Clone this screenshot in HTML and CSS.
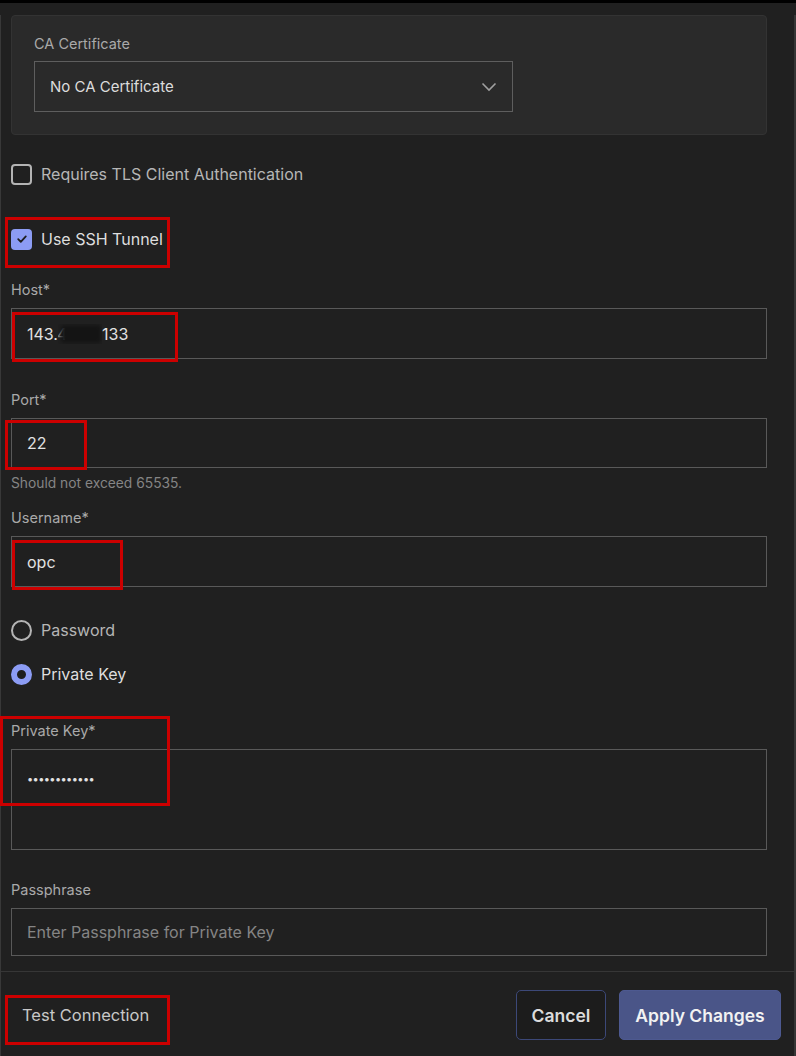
FILE: index.html
```html
<!DOCTYPE html>
<html lang="en">
<head>
    <meta charset="UTF-8">
    <meta name="viewport" content="width=device-width, initial-scale=1.0">
    <title>SSH Tunnel Settings</title>
    <link rel="stylesheet" href="styles.css">
</head>
<body>
    <div class="topbar"></div>

    <div class="panel">
        <div class="form">
            <!-- CA certificate -->
            <div class="card">
                <label class="label">CA Certificate</label>
                <div class="select">
                    <span>No CA Certificate</span>
                    <svg class="chevron" width="16" height="10" viewBox="0 0 16 10">
                        <path d="M1.5 1.5 L8 8 L14.5 1.5" fill="none" stroke="#a0a0a0" stroke-width="1.6"/>
                    </svg>
                </div>
            </div>

            <div class="check-row tls">
                <span class="box"></span>
                <span>Requires TLS Client Authentication</span>
            </div>

            <div class="check-row ssh">
                <span class="box checked">
                    <svg width="14" height="14" viewBox="0 0 14 14">
                        <path d="M3.2 7.2 L5.8 9.8 L10.8 4.4" fill="none" stroke="#1e1e1e" stroke-width="1.8" stroke-linecap="round" stroke-linejoin="round"/>
                    </svg>
                </span>
                <span class="bright">Use SSH Tunnel</span>
                <div class="mark mark-ssh"></div>
            </div>

            <!-- Host -->
            <div class="field host">
                <label class="label">Host*</label>
                <div class="input">143.<span class="redact"><span class="four">4</span></span>133</div>
                <div class="mark mark-host"></div>
            </div>

            <!-- Port -->
            <div class="field port">
                <label class="label">Port*</label>
                <div class="input">22</div>
                <div class="hint">Should not exceed 65535.</div>
                <div class="mark mark-port"></div>
            </div>

            <!-- Username -->
            <div class="field user">
                <label class="label">Username*</label>
                <div class="input">opc</div>
                <div class="mark mark-user"></div>
            </div>

            <div class="radio-row pw">
                <span class="radio"></span>
                <span>Password</span>
            </div>
            <div class="radio-row pk">
                <span class="radio on"></span>
                <span class="bright">Private Key</span>
            </div>

            <!-- Private key -->
            <div class="field key">
                <label class="label">Private Key*</label>
                <div class="textarea">••••••••••••</div>
                <div class="mark mark-key"></div>
            </div>

            <div class="field pass">
                <label class="label">Passphrase</label>
                <div class="input placeholder">Enter Passphrase for Private Key</div>
            </div>
        </div>

        <div class="footer">
            <div class="test">
                Test Connection
                <div class="mark mark-test"></div>
            </div>
            <div class="actions">
                <button class="btn cancel">Cancel</button>
                <button class="btn apply">Apply Changes</button>
            </div>
        </div>
    </div>
</body>
</html>
```

FILE: styles.css
```css
html {
    background: #202020;
}
body {
    margin: 0;
    width: 796px;
    min-height: 1056px;
    background: #202020;
    font-family: 'Inter', 'Noto Sans', sans-serif;
    color: #b8b8b8;
}
.topbar {
    height: 3px;
    background: #000;
}
.panel {
    min-height: 1053px;
    box-sizing: border-box;
    border-left: 1px solid #383838;
    border-right: 2px solid #363636;
}
.form {
    padding: 0 27px 0 10px;
}
.label {
    display: block;
    font-size: 14.5px;
    line-height: 20px;
    color: #a9a9a9;
}

/* card */
.card {
    margin-top: 12px;
    background: #2a2a2a;
    border: 1px solid #333;
    border-radius: 4px;
    padding: 18px 22px 22px;
}
.select {
    margin-top: 7px;
    width: 479px;
    height: 51px;
    box-sizing: border-box;
    border: 1px solid #5e5e5e;
    display: flex;
    align-items: center;
    justify-content: space-between;
    padding: 0 15px;
    font-size: 15px;
    color: #dcdcdc;
}

/* checkboxes */
.check-row, .radio-row {
    position: relative;
    display: flex;
    align-items: center;
    gap: 9px;
    height: 24px;
    font-size: 16px;
    color: #b6b6b6;
}
.check-row.tls { margin-top: 27px; }
.check-row.ssh { margin-top: 41px; }
.bright { color: #dedede; }
.box {
    width: 21px;
    height: 21px;
    box-sizing: border-box;
    border: 2px solid #b4b4b4;
    border-radius: 4px;
    display: flex;
    align-items: center;
    justify-content: center;
}
.box.checked {
    border: none;
    background: #8c9cf4;
}

/* inputs */
.field {
    position: relative;
}
.field.host { margin-top: 29px; }
.field.port { margin-top: 31px; }
.field.user { margin-top: 16px; }
.field.key { margin-top: 35px; }
.field.pass { margin-top: 30px; }
.input, .textarea {
    margin-top: 8px;
    height: 51px;
    box-sizing: border-box;
    border: 1px solid #595959;
    display: flex;
    align-items: center;
    padding: 0 15px;
    font-size: 16px;
    color: #e2e2e2;
}
.field.port .input { height: 50px; }
.field.pass .input { height: 48px; }
.input.placeholder { color: #858585; }
.textarea {
    height: 101px;
    align-items: flex-start;
    padding-top: 22px;
    font-size: 11px;
    letter-spacing: -0.6px;
}
.hint {
    margin-top: 6px;
    font-size: 13.8px;
    line-height: 18px;
    color: #858585;
}
.redact {
    display: inline-block;
    position: relative;
    width: 44px;
    height: 20px;
    overflow: hidden;
    vertical-align: middle;
}
.four {
    position: absolute;
    left: -1px;
    top: 0;
    color: #8a8a8a;
}
.redact::after {
    content: "";
    position: absolute;
    left: 3px;
    top: 1px;
    width: 40px;
    height: 18px;
    background: #141414;
    filter: blur(2px);
}

/* radios */
.radio-row.pw { margin-top: 31px; }
.radio-row.pk { margin-top: 20px; }
.radio {
    width: 21px;
    height: 21px;
    box-sizing: border-box;
    border: 2px solid #b4b4b4;
    border-radius: 50%;
}
.radio.on {
    border: 6px solid #8c9cf4;
    background: #1e1e1e;
}

/* footer */
.footer {
    margin-top: 15px;
    border-top: 1px solid #363636;
    padding: 18px 13px 0 21px;
    display: flex;
    justify-content: space-between;
    align-items: center;
}
.test {
    position: relative;
    font-size: 16.5px;
    color: #c8c8c8;
}
.actions {
    display: flex;
    gap: 13px;
}
.btn {
    height: 50px;
    border-radius: 5px;
    font-family: 'Inter', 'Noto Sans', sans-serif;
    font-size: 17.5px;
    font-weight: 600;
    cursor: pointer;
}
.cancel {
    width: 90px;
    background: #1c1c1c;
    border: 1px solid #3c4878;
    color: #dcdcdc;
}
.apply {
    width: 162px;
    background: #4a5588;
    border: 1px solid #4d5990;
    color: #f2f2f2;
}

/* red annotation boxes */
.mark {
    position: absolute;
    border: 3px solid #cc0000;
    box-sizing: border-box;
    pointer-events: none;
}
.mark-ssh { left: -6px; top: -10px; width: 165px; height: 51px; }
.mark-host { left: 1px; top: 32px; width: 166px; height: 50px; }
.mark-port { left: -6px; top: 30px; width: 82px; height: 50px; }
.mark-user { left: 1px; top: 32px; width: 111px; height: 50px; }
.mark-key { left: -11px; top: -5px; width: 170px; height: 90px; }
.mark-test { left: -17px; top: -10px; width: 165px; height: 50px; }
```
